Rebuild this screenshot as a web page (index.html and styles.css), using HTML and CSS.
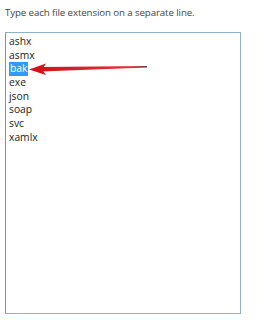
FILE: index.html
```
<!DOCTYPE html>
<html lang="en">
<head>
  <meta charset="UTF-8" />
  <title>File extensions</title>
  <link rel="stylesheet" href="styles.css">
</head>
<body>
  <p class="hint">Type each file extension on a separate line.</p>
  <div class="box">
    <div class="list">
      <div>ashx</div>
      <div>asmx</div>
      <div class="row"><span class="sel">bak</span>
        <svg class="arrow" width="122" height="14" viewBox="0 0 122 14">
          <defs>
            <linearGradient id="shaft" x1="0" x2="1" y1="0" y2="0">
              <stop offset="0" stop-color="#d4121a"/>
              <stop offset="0.85" stop-color="#e0343a"/>
              <stop offset="1" stop-color="#6a3a3c"/>
            </linearGradient>
          </defs>
          <polygon points="12,5 118,4 118,5.6 12,9.6" fill="url(#shaft)"/>
          <polygon points="0,7.6 17,1.6 13,7.4 17,13" fill="#d4121a"/>
        </svg>
      </div>
      <div>exe</div>
      <div>json</div>
      <div>soap</div>
      <div>svc</div>
      <div>xamlx</div>
    </div>
  </div>
</body>
</html>
```
FILE: styles.css
```
body { margin: 0; padding: 0 0 0 5px; background: #fff; font-family: "Open Sans", "Noto Sans", sans-serif; font-size: 10px; color: #333; }
.hint { margin: 0; padding-top: 6px; height: 26px; color: #444; font-size: 9.7px; letter-spacing: -0.1px; }
.box { width: 234px; height: 280px; border: 1px solid #8fb0c9; border-left-color: #7c98ad; }
.list { padding: 2px 0 0 3px; line-height: 13.6px; color: #222; font-size: 10.3px; }
.row { display: flex; align-items: center; }
.sel { background: #3399ff; color: #fff; padding: 0 1px; }
.arrow { margin-left: 1px; }
```
